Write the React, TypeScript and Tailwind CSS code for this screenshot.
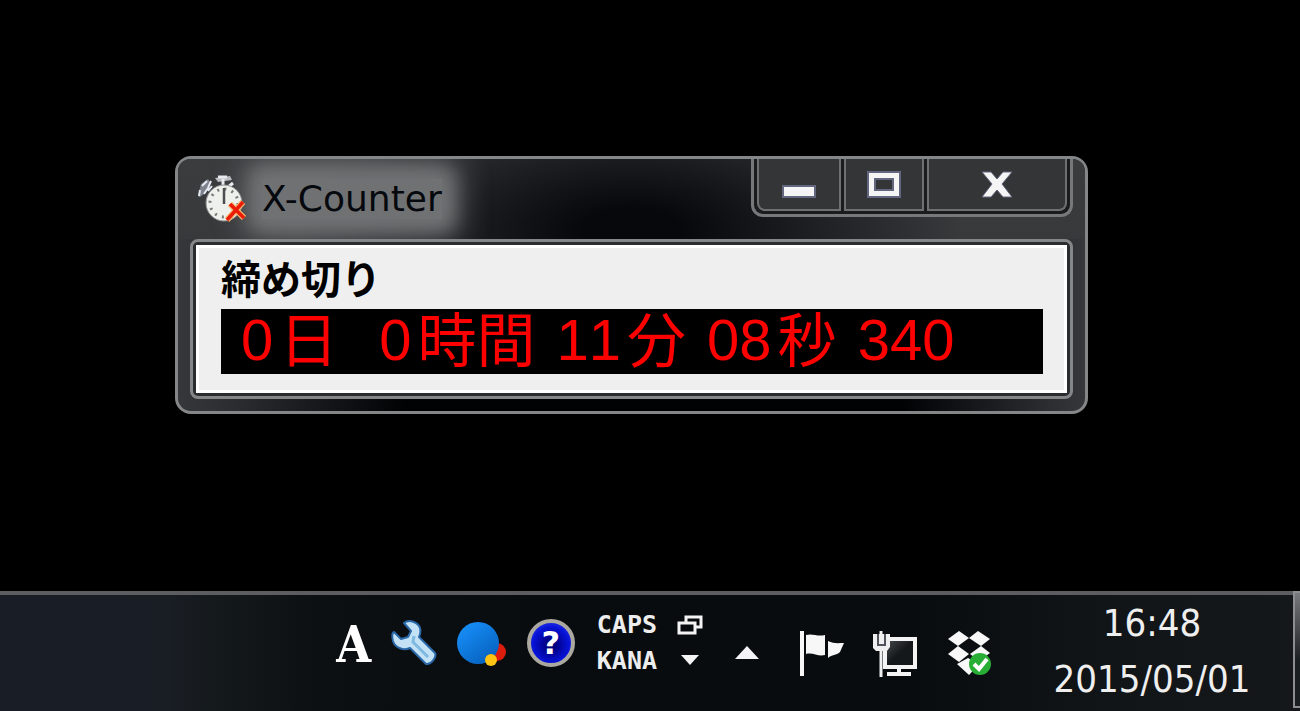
import React from 'react';

interface CounterPart {
  value: string;
  unit?: string;
}

const parts: CounterPart[] = [
  { value: '0', unit: '日' },
  { value: '0', unit: '時間' },
  { value: '11', unit: '分' },
  { value: '08', unit: '秒' },
  { value: '340' },
];

const StopwatchIcon = () => (
  <svg viewBox="0 0 50 50" className="relative z-10 size-[50px] shrink-0" aria-hidden="true">
    <path d="M2 22 L5 10 L12 5 L15 9 L8 20 L4 23 Z" fill="#7d828c" />
    <path d="M3 22 L4 16 M6 12 L11 7 M8 20 L12 14 L15 7 M16 12 L12 17" stroke="#e4e8f0" strokeWidth="2" />
    <path d="M19 4 L34 2 L36 6 L22 8 Z" fill="#b9bcc1" />
    <path d="M22 3 H31 M27 5 V14 M37 9 L31 14" stroke="#e8eaee" strokeWidth="3" />
    <circle cx="28" cy="29" r="18" fill="#eef0ec" stroke="#8d8f90" strokeWidth="1" />
    <circle cx="28" cy="29" r="14" fill="none" stroke="#777b78" strokeWidth="3" strokeDasharray="2 5.33" />
    <path d="M28 14 V30" stroke="#4c4f50" strokeWidth="2.5" />
    <path d="M31 46 L47 28 M34 30 L48 44" stroke="#f6b46a" strokeWidth="6" />
    <path d="M31 46 L47 28 M34 30 L48 44" stroke="#ea1c08" strokeWidth="3.5" />
  </svg>
);

const WrenchIcon = () => (
  <svg viewBox="0 0 46 48" className="h-12 w-[46px]" aria-hidden="true">
    <path
      d="M13 4 C18 0 27 3 29 9 C30 13 29 16 28 18 L44 34 C46 38 40 46 35 45 L19 29 C13 32 4 29 2 22 C1 18 1 14 3 13 L10 20 L17 18 L20 12 Z"
      fill="#c4e2f5"
      stroke="#2b68a8"
      strokeWidth="2"
      strokeLinejoin="round"
    />
    <path d="M23 17 L22 23 L37 38" fill="none" stroke="#7db9e0" strokeWidth="3" />
  </svg>
);

const BallIcon = () => (
  <svg viewBox="0 0 50 48" className="h-12 w-[50px]" aria-hidden="true">
    <defs>
      <linearGradient id="ball" x1="0" y1="0" x2="0.8" y2="1">
        <stop offset="0" stopColor="#1a94ff" />
        <stop offset="1" stopColor="#0560bd" />
      </linearGradient>
    </defs>
    <circle cx="40" cy="33" r="9" fill="#dc1c0c" />
    <circle cx="21" cy="24" r="21" fill="url(#ball)" />
    <circle cx="34" cy="41" r="6" fill="#fcc313" />
  </svg>
);

const RestoreIcon = () => (
  <svg viewBox="0 0 26 20" className="h-5 w-[26px]" fill="none" stroke="#f4f4f4" strokeWidth="3" aria-hidden="true">
    <path d="M9 7 V2 H24 V12 H19" />
    <path d="M2 8 H18 V18 H2 Z" />
  </svg>
);

const FlagIcon = () => (
  <svg viewBox="0 0 46 46" className="size-[46px]" fill="#f7f7f7" aria-hidden="true">
    <path d="M1 0 H5 V45 H1 Z" />
    <path d="M7 4 C14 2 18 6 26 4 V24 C19 26 14 21 7 23 Z" />
    <path d="M29 10 C35 13 39 12 45 12 L41 21 C37 25 33 23 29 27 Z" />
  </svg>
);

const NetworkIcon = () => (
  <svg viewBox="0 0 46 48" className="h-12 w-[46px]" fill="none" aria-hidden="true">
    <defs>
      <linearGradient id="screen" x1="0" y1="0" x2="1" y2="1">
        <stop offset="0" stopColor="#4b4f52" />
        <stop offset="0.5" stopColor="#14181b" />
      </linearGradient>
    </defs>
    <path d="M12 8 H42 V36 H12 Z" fill="url(#screen)" stroke="#f4f4f4" strokeWidth="4" />
    <path d="M26 36 V42 M14 43 H38" stroke="#f4f4f4" strokeWidth="4" />
    <path d="M0 3 H17 V16 L14 20 H3 L0 17 Z" fill="#efefef" />
    <path d="M5 3 V14 H12 V3" stroke="#50545a" strokeWidth="2" />
    <path d="M8 0 V12 M8 18 V46" stroke="#efefef" strokeWidth="3" />
  </svg>
);

const DropboxIcon = () => (
  <svg viewBox="0 0 46 46" className="size-[46px]" aria-hidden="true">
    <g fill="#f8f8f8">
      <path d="M12 0 L22 7 L11 15 L1 8 Z" />
      <path d="M31 0 L43 8 L34 15 L22 7 Z" />
      <path d="M11 15 L22 23 L12 31 L1 23 Z" />
      <path d="M34 15 L43 22 L32 30 L23 23 Z" />
      <path d="M10 33 L21 27 L32 33 L22 44 Z" />
    </g>
    <circle cx="33" cy="33" r="11" fill="#28ae35" />
    <path d="M27 33 L32 38 L40 28" fill="none" stroke="#fff" strokeWidth="4" />
  </svg>
);

const captionButton =
  'flex h-[52px] justify-center border-2 border-t-0 border-[#6f7072] bg-[#343537] pt-3';

const CounterWindow: React.FC = () => (
  <section
    aria-label="X-Counter"
    className="absolute left-[175px] top-[156px] w-[913px] rounded-2xl border-3 border-[#858688] bg-[linear-gradient(90deg,#36373a,#2c2d31_6%,#010204_25%,#010204_80%,#2c2d31_96%,#36373a)] px-3 pb-3"
  >
    <header className="-mx-3 flex h-20 items-center overflow-hidden rounded-t-xl bg-[radial-gradient(ellipse_330px_150px_at_50%_90%,#06080c_15%,transparent),linear-gradient(#3b3c3e,#38393b)] pl-[18px] pr-3">
      <StopwatchIcon />
      <h1 className="ml-4 bg-[#707173] font-['DejaVu_Sans',sans-serif] text-[36px] leading-10 text-[#05080d] shadow-[0_0_30px_16px_#707173,0_0_16px_8px_#707173]">
        X-Counter
      </h1>
      <div className="ml-auto flex gap-[3px] self-start rounded-b-xl border-3 border-t-0 border-[#77787a] bg-[#1b1c1e] px-[3px] pb-[3px]">
        <button aria-label="Minimize" className={`${captionButton} w-[84px] rounded-bl-lg`}>
          <svg viewBox="0 0 36 30" className="h-[30px] w-9">
            <path d="M2 15 H34 V26 H2 Z" fill="#f5f5f5" stroke="#62667e" strokeWidth="2" />
          </svg>
        </button>
        <button aria-label="Maximize" className={`${captionButton} w-20`}>
          <svg viewBox="0 0 36 30" className="h-[30px] w-9">
            <path d="M2 1 H34 V26 H2 Z M9 8 V19 H27 V8 Z" fill="#f5f5f5" fillRule="evenodd" stroke="#62667e" strokeWidth="2" />
          </svg>
        </button>
        <button aria-label="Close" className={`${captionButton} w-[140px] rounded-br-lg`}>
          <svg viewBox="0 0 32 30" className="h-[30px] w-8">
            <path
              d="M1 1 H10 L16 8 L22 1 H31 L21 13 L31 26 H22 L16 19 L10 26 H1 L11 13 Z"
              fill="#f5f5f5"
              stroke="#62667e"
              strokeWidth="1"
            />
          </svg>
        </button>
      </div>
    </header>

    <div className="rounded-lg border-3 border-[#858688] bg-[#2b2c2e] p-[3px]">
      <div className="border-3 border-white bg-[#efefef] pb-4 pl-[22px] pr-[21px]">
        <h2 className="h-[61px] font-['Noto_Sans_CJK_JP',sans-serif] text-[40px] font-bold leading-[58px] text-black">
          締め切り
        </h2>
        <div
          role="timer"
          className="flex h-[65px] items-center gap-[21px] bg-black pb-1 pl-5 leading-[61px] text-[#ff0000] [font-kerning:none]"
        >
          {parts.map((part, index) => (
            <div key={index} className={`flex items-center ${index === 1 ? 'ml-5' : ''}`}>
              <span className="font-['Liberation_Sans',sans-serif] text-[58px]">{part.value}</span>
              {part.unit && (
                <span className="ml-1.5 pb-1.5 font-['Noto_Sans_CJK_JP',sans-serif] text-[59px]">
                  {part.unit}
                </span>
              )}
            </div>
          ))}
        </div>
      </div>
    </div>
  </section>
);

const Taskbar: React.FC = () => (
  <footer className="flex h-[120px] justify-end bg-[linear-gradient(90deg,#191d25,#191d24_13%,#14191b_17%,#0d1013_24%,#080c0f_42%,#080c0f_70%,#121518_85%,#15181b)]">
    <div className="flex flex-1 justify-end border-t-4 border-[#5b5d60] pr-10">
      {/* Language bar */}
      <div className="flex gap-5 pt-6 text-white">
        <button
          aria-label="Input mode"
          className="flex h-[52px] w-[34px] justify-center font-['DejaVu_Serif_Condensed','Liberation_Serif',serif] text-[50px] font-bold leading-[52px]"
        >
          A
        </button>
        <button aria-label="Tools" className="h-12">
          <WrenchIcon />
        </button>
        <button aria-label="IME pad" className="h-12">
          <BallIcon />
        </button>
        <button
          aria-label="Help"
          className="size-12 rounded-full border-4 border-[#aaa89f] bg-[radial-gradient(circle_at_50%_55%,#000080_15%,#0712d8_60%,#3b50f0)] text-center font-['DejaVu_Sans',sans-serif] text-[32px] font-bold leading-10"
        >
          ?
        </button>
      </div>
      <div className="ml-[22px] pt-3 font-['DejaVu_Sans_Mono',monospace] text-[25px] font-bold leading-9 text-[#ededed]">
        <p>CAPS</p>
        <p>KANA</p>
      </div>
      <div className="ml-5 flex flex-col items-center gap-5 pt-5">
        <button aria-label="Restore">
          <RestoreIcon />
        </button>
        <button aria-label="Options">
          <svg viewBox="0 0 18 10" className="h-2.5 w-[18px]">
            <path d="M0 0 H18 L9 10 Z" fill="#f4f4f4" />
          </svg>
        </button>
      </div>

      {/* Notification area */}
      <button aria-label="Show hidden icons" className="ml-8 self-start pt-[51px]">
        <svg viewBox="0 0 24 13" className="h-[13px] w-6">
          <path d="M12 0 L24 13 H0 Z" fill="#f4f4f8" />
        </svg>
      </button>
      <div className="ml-10 flex items-start gap-7 pt-9">
        <FlagIcon />
        <NetworkIcon />
        <DropboxIcon />
      </div>
      <div className="ml-[58px] w-[202px] text-center font-['DejaVu_Sans_Condensed','DejaVu_Sans',sans-serif] text-[38px] leading-[56px] text-[#efefef]">
        <p>16:48</p>
        <p>2015/05/01</p>
      </div>
    </div>
    <button
      aria-label="Show desktop"
      className="h-[117px] w-[7px] border-2 border-r-0 border-[#8b8d90] bg-[linear-gradient(#77797c,#1b1e21_60%)]"
    />
  </footer>
);

const App: React.FC = () => (
  <div className="relative flex min-h-screen flex-col justify-end overflow-hidden bg-black">
    <CounterWindow />
    <Taskbar />
  </div>
);

export default App;
